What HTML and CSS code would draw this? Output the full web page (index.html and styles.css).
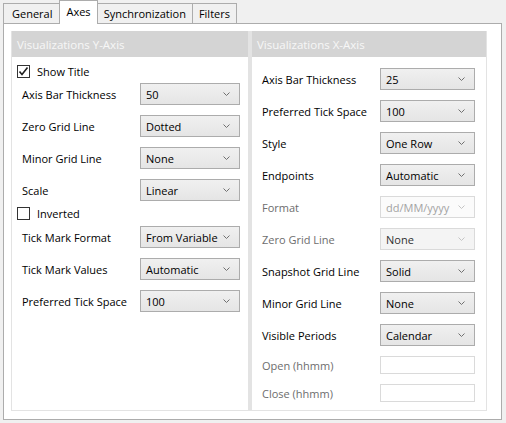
FILE: index.html
```html
<!DOCTYPE html>
<html>
<head>
<meta charset="utf-8">
<link rel="stylesheet" href="styles.css">
</head>
<body>
<div class="window">
  <div class="tabs">
    <div class="tab">General</div>
    <div class="tab active">Axes</div>
    <div class="tab">Synchronization</div>
    <div class="tab">Filters</div>
  </div>
  <div class="tabpanel">
    <div class="group group-left">
      <div class="group-head">Visualizations Y-Axis</div>
      <div class="group-body">
        <div class="check-row first-check">
          <span class="cb"><svg width="11" height="11" viewBox="0 0 11 11"><path d="M1.5 5.5 L4 8.5 L9.5 1.5" fill="none" stroke="#1e1e1e" stroke-width="1.6"/></svg></span>
          <span>Show Title</span>
        </div>
        <div class="row"><span class="lbl">Axis Bar Thickness</span><div class="combo"><span>50</span><svg class="chev" width="7" height="4" viewBox="0 0 7 4"><path d="M0.5 0.5 L3.5 3.5 L6.5 0.5" fill="none" stroke="#707070"/></svg></div></div>
        <div class="row"><span class="lbl">Zero Grid Line</span><div class="combo"><span>Dotted</span><svg class="chev" width="7" height="4" viewBox="0 0 7 4"><path d="M0.5 0.5 L3.5 3.5 L6.5 0.5" fill="none" stroke="#707070"/></svg></div></div>
        <div class="row"><span class="lbl">Minor Grid Line</span><div class="combo"><span>None</span><svg class="chev" width="7" height="4" viewBox="0 0 7 4"><path d="M0.5 0.5 L3.5 3.5 L6.5 0.5" fill="none" stroke="#707070"/></svg></div></div>
        <div class="row"><span class="lbl">Scale</span><div class="combo"><span>Linear</span><svg class="chev" width="7" height="4" viewBox="0 0 7 4"><path d="M0.5 0.5 L3.5 3.5 L6.5 0.5" fill="none" stroke="#707070"/></svg></div></div>
        <div class="check-row inverted-check">
          <span class="cb"></span>
          <span>Inverted</span>
        </div>
        <div class="row"><span class="lbl">Tick Mark Format</span><div class="combo"><span>From Variable</span><svg class="chev" width="7" height="4" viewBox="0 0 7 4"><path d="M0.5 0.5 L3.5 3.5 L6.5 0.5" fill="none" stroke="#707070"/></svg></div></div>
        <div class="row"><span class="lbl">Tick Mark Values</span><div class="combo"><span>Automatic</span><svg class="chev" width="7" height="4" viewBox="0 0 7 4"><path d="M0.5 0.5 L3.5 3.5 L6.5 0.5" fill="none" stroke="#707070"/></svg></div></div>
        <div class="row"><span class="lbl">Preferred Tick Space</span><div class="combo"><span>100</span><svg class="chev" width="7" height="4" viewBox="0 0 7 4"><path d="M0.5 0.5 L3.5 3.5 L6.5 0.5" fill="none" stroke="#707070"/></svg></div></div>
      </div>
    </div>
    <div class="group group-right">
      <div class="group-head">Visualizations X-Axis</div>
      <div class="group-body">
        <div class="row"><span class="lbl">Axis Bar Thickness</span><div class="combo"><span>25</span><svg class="chev" width="7" height="4" viewBox="0 0 7 4"><path d="M0.5 0.5 L3.5 3.5 L6.5 0.5" fill="none" stroke="#707070"/></svg></div></div>
        <div class="row"><span class="lbl">Preferred Tick Space</span><div class="combo"><span>100</span><svg class="chev" width="7" height="4" viewBox="0 0 7 4"><path d="M0.5 0.5 L3.5 3.5 L6.5 0.5" fill="none" stroke="#707070"/></svg></div></div>
        <div class="row"><span class="lbl">Style</span><div class="combo"><span>One Row</span><svg class="chev" width="7" height="4" viewBox="0 0 7 4"><path d="M0.5 0.5 L3.5 3.5 L6.5 0.5" fill="none" stroke="#707070"/></svg></div></div>
        <div class="row"><span class="lbl">Endpoints</span><div class="combo"><span>Automatic</span><svg class="chev" width="7" height="4" viewBox="0 0 7 4"><path d="M0.5 0.5 L3.5 3.5 L6.5 0.5" fill="none" stroke="#707070"/></svg></div></div>
        <div class="row disabled"><span class="lbl">Format</span><div class="combo combo-edit-disabled"><span>dd/MM/yyyy</span><svg class="chev" width="7" height="4" viewBox="0 0 7 4"><path d="M0.5 0.5 L3.5 3.5 L6.5 0.5" fill="none" stroke="#c4c4c4"/></svg></div></div>
        <div class="row disabled"><span class="lbl">Zero Grid Line</span><div class="combo combo-disabled"><span>None</span><svg class="chev" width="7" height="4" viewBox="0 0 7 4"><path d="M0.5 0.5 L3.5 3.5 L6.5 0.5" fill="none" stroke="#c4c4c4"/></svg></div></div>
        <div class="row"><span class="lbl">Snapshot Grid Line</span><div class="combo"><span>Solid</span><svg class="chev" width="7" height="4" viewBox="0 0 7 4"><path d="M0.5 0.5 L3.5 3.5 L6.5 0.5" fill="none" stroke="#707070"/></svg></div></div>
        <div class="row"><span class="lbl">Minor Grid Line</span><div class="combo"><span>None</span><svg class="chev" width="7" height="4" viewBox="0 0 7 4"><path d="M0.5 0.5 L3.5 3.5 L6.5 0.5" fill="none" stroke="#707070"/></svg></div></div>
        <div class="row"><span class="lbl">Visible Periods</span><div class="combo"><span>Calendar</span><svg class="chev" width="7" height="4" viewBox="0 0 7 4"><path d="M0.5 0.5 L3.5 3.5 L6.5 0.5" fill="none" stroke="#707070"/></svg></div></div>
        <div class="row text-row disabled"><span class="lbl">Open (hhmm)</span><div class="textbox"></div></div>
        <div class="row text-row disabled"><span class="lbl">Close (hhmm)</span><div class="textbox"></div></div>
      </div>
    </div>
  </div>
</div>
</body>
</html>
```
FILE: styles.css
```css
* { box-sizing: border-box; }
html, body {
  margin: 0;
  padding: 0;
  background: #f0f0f0;
}
body {
  font-family: "Segoe UI", "Open Sans", "Noto Sans", sans-serif;
  font-size: 11px;
  color: #000000;
  width: 506px;
  height: 423px;
  overflow: hidden;
}
.window {
  padding: 0;
}
.tabs {
  display: flex;
  align-items: flex-end;
  height: 24px;
  padding-left: 3px;
}
.tab {
  height: 20px;
  margin-bottom: 1px;
  padding: 0 6px;
  border: 1px solid #acacac;
  border-bottom: none;
  border-right: none;
  background: #f0f0f0;
  display: flex;
  align-items: center;
  line-height: 1;
}
.tab:first-child {
  padding: 0 7px 0 8px;
}
.tab:last-child {
  border-right: 1px solid #acacac;
}
.tab.active {
  position: relative;
  z-index: 1;
  height: 24px;
  margin-bottom: 0;
  background: #ffffff;
  padding: 0 6px 2px;
  border-right: 1px solid #acacac;
}
.tab.active + .tab {
  border-left: none;
}
.tabpanel {
  margin-top: -1px;
  margin-left: 3px;
  width: 499px;
  height: 397px;
  border: 1px solid #acacac;
  background: #ffffff;
  padding: 7px 13px 8px 7px;
  display: flex;
}
.group {
  display: flex;
  flex-direction: column;
  height: 380px;
  border: 1px solid #e3e3e3;
  border-top: none;
}
.group-left {
  width: 239px;
  border-right-width: 2px;
}
.group-right {
  width: 237px;
  border-left-width: 2px;
}
.group-head {
  height: 26px;
  background: #d4d4d4;
  color: #f7f7f7;
  font-size: 11.5px;
  padding-left: 5px;
  display: flex;
  align-items: center;
}
.group-body {
  padding: 7px 0 0 10px;
  display: flex;
  flex-direction: column;
}
.check-row {
  display: flex;
  align-items: center;
  height: 15px;
  margin-left: -5px;
  gap: 7px;
}
.inverted-check {
  margin-top: -2px;
  height: 17px;
}
.cb {
  width: 13px;
  height: 13px;
  border: 1px solid #333333;
  background: #ffffff;
  display: flex;
  align-items: center;
  justify-content: center;
}
.row {
  display: flex;
  align-items: flex-start;
  height: 32px;
}
.lbl {
  width: 118px;
  margin-top: 4px;
  height: 22px;
  display: flex;
  align-items: center;
}
.combo {
  margin-top: 4px;
  height: 22px;
  border: 1px solid #acacac;
  background: linear-gradient(#f0f0f0, #e5e5e5);
  display: flex;
  align-items: center;
  justify-content: space-between;
  padding: 0 9px 0 5px;
  color: #000000;
}
.group-left .combo { width: 100px; }
.group-right .combo { width: 95px; }
.combo .chev { flex: none; margin-top: -1px; }
.combo-disabled {
  background: #f4f4f4;
  border-color: #dadada;
  color: #303030;
}
.combo-edit-disabled {
  background: #fbfbfb;
  border-color: #dadada;
  color: #a3a3a3;
}
.disabled .lbl { color: #6d6d6d; }
.text-row {
  height: 28px;
}
.text-row .lbl { height: 18px; }
.textbox {
  margin-top: 4px;
  width: 95px;
  height: 18px;
  border: 1px solid #dadada;
  background: #ffffff;
}
```
